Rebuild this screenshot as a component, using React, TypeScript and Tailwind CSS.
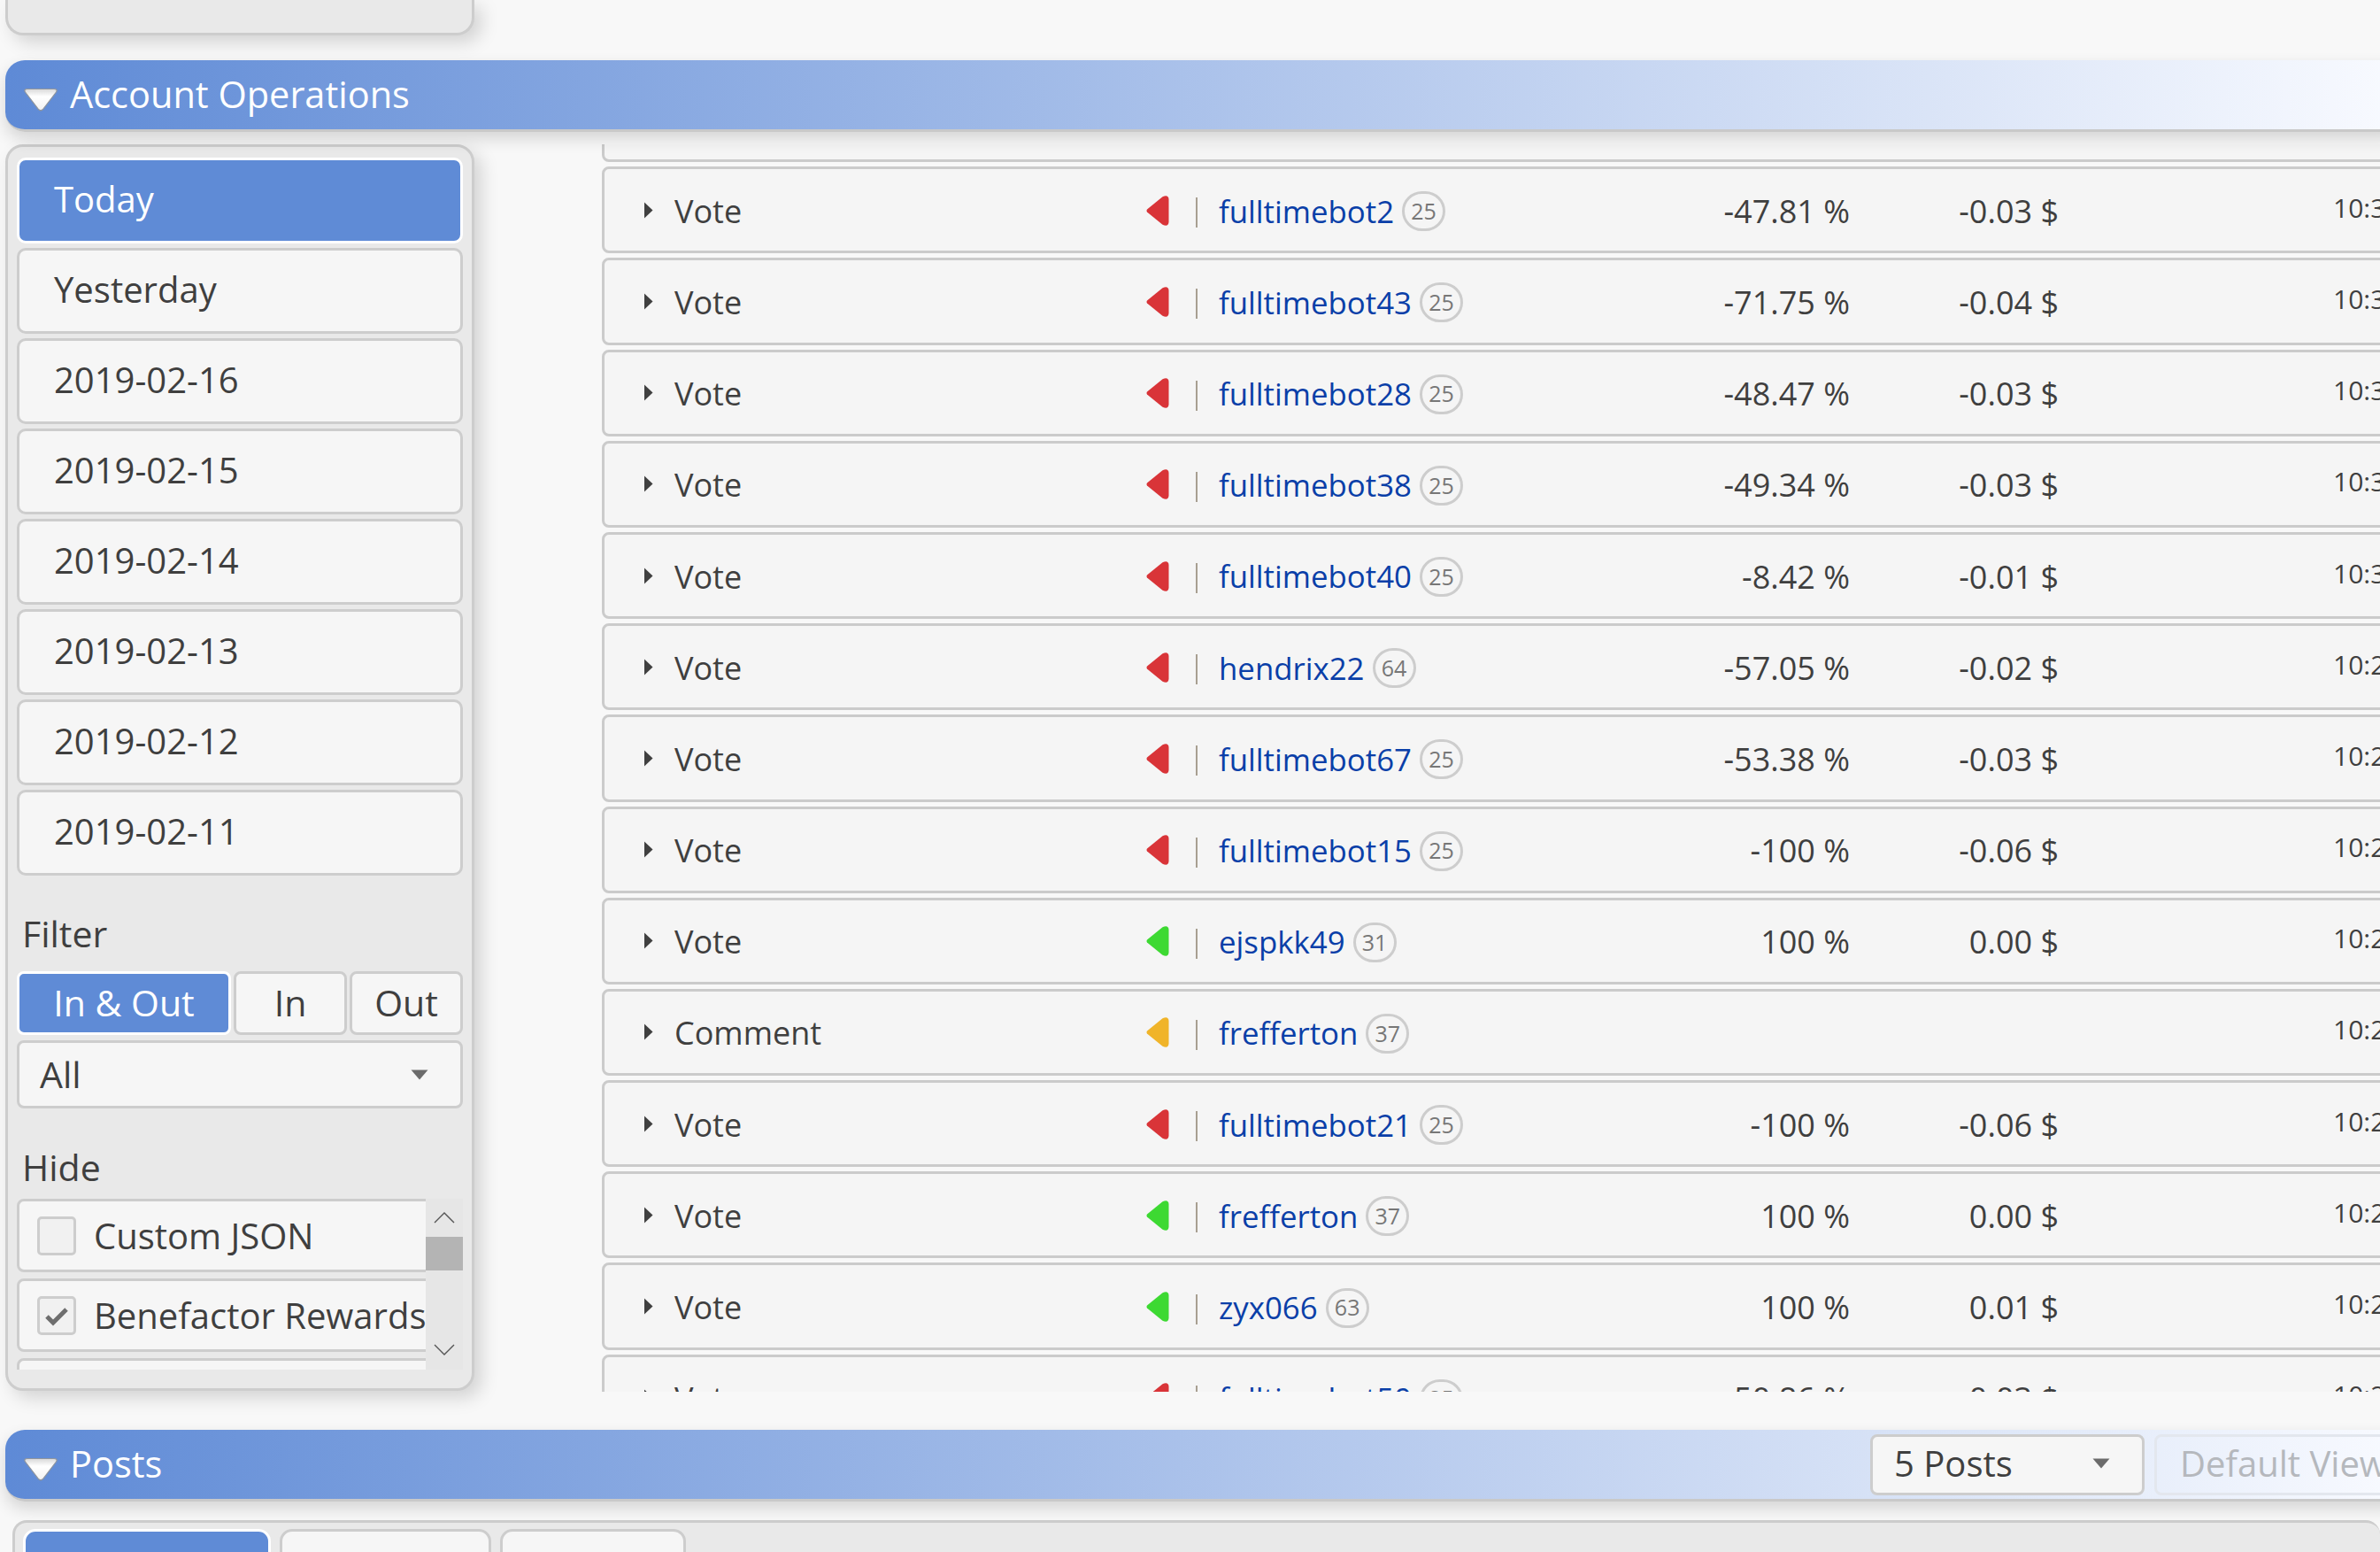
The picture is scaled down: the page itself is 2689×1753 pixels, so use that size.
type Op = {
    type: string
    dir: "red" | "green" | "amber"
    name: string
    rep: string
    pct?: string
    usd?: string
    time: string
}

const ops: Op[] = [
    { type: "Vote", dir: "red", name: "fulltimebot2", rep: "25", pct: "-47.81 %", usd: "-0.03 $", time: "10:31:12" },
    { type: "Vote", dir: "red", name: "fulltimebot43", rep: "25", pct: "-71.75 %", usd: "-0.04 $", time: "10:31:09" },
    { type: "Vote", dir: "red", name: "fulltimebot28", rep: "25", pct: "-48.47 %", usd: "-0.03 $", time: "10:31:03" },
    { type: "Vote", dir: "red", name: "fulltimebot38", rep: "25", pct: "-49.34 %", usd: "-0.03 $", time: "10:30:57" },
    { type: "Vote", dir: "red", name: "fulltimebot40", rep: "25", pct: "-8.42 %", usd: "-0.01 $", time: "10:30:51" },
    { type: "Vote", dir: "red", name: "hendrix22", rep: "64", pct: "-57.05 %", usd: "-0.02 $", time: "10:29:48" },
    { type: "Vote", dir: "red", name: "fulltimebot67", rep: "25", pct: "-53.38 %", usd: "-0.03 $", time: "10:29:42" },
    { type: "Vote", dir: "red", name: "fulltimebot15", rep: "25", pct: "-100 %", usd: "-0.06 $", time: "10:29:36" },
    { type: "Vote", dir: "green", name: "ejspkk49", rep: "31", pct: "100 %", usd: "0.00 $", time: "10:29:30" },
    { type: "Comment", dir: "amber", name: "frefferton", rep: "37", time: "10:29:24" },
    { type: "Vote", dir: "red", name: "fulltimebot21", rep: "25", pct: "-100 %", usd: "-0.06 $", time: "10:29:18" },
    { type: "Vote", dir: "green", name: "frefferton", rep: "37", pct: "100 %", usd: "0.00 $", time: "10:29:12" },
    { type: "Vote", dir: "green", name: "zyx066", rep: "63", pct: "100 %", usd: "0.01 $", time: "10:29:06" },
    { type: "Vote", dir: "red", name: "fulltimebot50", rep: "25", pct: "-50.86 %", usd: "-0.03 $", time: "10:29:00" },
]

const dates = ["Yesterday", "2019-02-16", "2019-02-15", "2019-02-14", "2019-02-13", "2019-02-12", "2019-02-11"]

const dirColor = { red: "#d93438", green: "#3dd932", amber: "#f0b429" }

function DirIcon({ dir }: { dir: Op["dir"] }) {
    return (
        <svg width="26" height="34" viewBox="0 0 26 34" className="mt-[1px] shrink-0">
            <path
                d="M1 15.5 L18.5 1.2 Q25 -1.5 25.5 4 L25.5 30 Q25 35.5 18.5 32.8 L1 18.5 Q0 17 1 15.5 Z"
                fill={dirColor[dir]}
            />
        </svg>
    )
}

function Disclosure() {
    return (
        <svg width="40" height="27" viewBox="0 0 40 27" className="mt-[10px] shrink-0">
            <defs>
                <linearGradient id="disc" x1="0" y1="0" x2="0" y2="1">
                    <stop offset="0" stopColor="#d8d8d8" />
                    <stop offset="0.35" stopColor="#ffffff" />
                    <stop offset="1" stopColor="#f2f2f2" />
                </linearGradient>
            </defs>
            <path
                d="M5 1.5 L35 1.5 Q39.5 1.5 37.5 5 L22.5 24.5 Q20 27 17.5 24.5 L2.5 5 Q0.5 1.5 5 1.5 Z"
                fill="url(#disc)"
                stroke="#8f959d"
                strokeWidth="1.2"
            />
        </svg>
    )
}

function Caret() {
    return (
        <svg width="20" height="12" viewBox="0 0 20 12" className="shrink-0">
            <path d="M0.5 0.5 L19.5 0.5 L10 11.5 Z" fill="#6b6b6b" />
        </svg>
    )
}

function SectionHeader({ title, children }: { title: string; children?: React.ReactNode }) {
    return (
        <div className="relative z-10 flex h-[81px] w-[2700px] items-center rounded-l-[22px] border-b-[3px] border-[#c9c9c9] bg-[linear-gradient(90deg,#5e8ad6_0%,#f8faff_100%)] pl-[20px] shadow-[0_8px_18px_rgba(0,0,0,0.14)]">
            <Disclosure />
            <span className="mb-[1px] ml-[13px] text-[41.5px] leading-none text-white">{title}</span>
            {children}
        </div>
    )
}

function OpRow({ op }: { op: Op }) {
    return (
        <div className="flex h-[98.2px] w-[2100px] shrink-0 items-center rounded-[8px] border-[3px] border-[#cbcbcb] bg-[#f5f5f5] pl-[44px] text-[36px] text-[#3f3f3f]">
            <svg width="11" height="19" viewBox="0 0 11 19" className="mr-[24px] shrink-0">
                <path d="M1 0.5 L10.5 9.5 L1 18.5 Z" fill="#404040" />
            </svg>
            <span className="mt-[3px] w-[533px] shrink-0">{op.type}</span>
            <DirIcon dir={op.dir} />
            <span className="ml-[30px] mt-[6px] h-[34px] w-[2px] shrink-0 bg-[#a89f91]" />
            <div className="ml-[24px] mt-[3px] flex w-[525px] shrink-0 items-center">
                <span className="text-[34.8px] text-[#0a3fa8]">{op.name}</span>
                <span className="ml-[9px] flex h-[45px] w-[49px] items-center justify-center rounded-full border-[3px] border-[#cdcdcd] text-[25px] text-[#777]">
                    {op.rep}
                </span>
            </div>
            <span className="mt-[3px] w-[188px] shrink-0 text-right">{op.pct}</span>
            <span className="mt-[3px] w-[236px] shrink-0 text-right">{op.usd}</span>
            <span className="ml-[310px] mt-[-6px] shrink-0 text-[30px]">{op.time}</span>
        </div>
    )
}

function DateButton({ label, active }: { label: string; active?: boolean }) {
    return (
        <div
            className={
                active
                    ? "flex h-[97px] items-center rounded-[10px] border-[3px] border-white bg-[#5f8bd6] pb-[3px] pl-[39px] text-[40px] text-white"
                    : "flex h-[97px] items-center rounded-[10px] border-[3px] border-[#cdcdcd] bg-[#f6f6f6] pb-[3px] pl-[39px] text-[40px] text-[#3f3f3f]"
            }
        >
            {label}
        </div>
    )
}

function HideRow({ label, checked }: { label: string; checked?: boolean }) {
    return (
        <div className="flex h-[83px] w-[480px] shrink-0 items-center rounded-[8px] border-[3px] border-[#cdcdcd] bg-[#f6f6f6] pl-[20px] text-[40px] text-[#3f3f3f]">
            <span className="flex h-[44px] w-[44px] shrink-0 items-center justify-center rounded-[5px] border-[3px] border-[#cdcdcd] bg-[#f1f1f1]">
                {checked && (
                    <svg width="28" height="24" viewBox="0 0 28 24">
                        <path d="M3 13 L10 20 L25 5" fill="none" stroke="#6e6e6e" strokeWidth="5" />
                    </svg>
                )}
            </span>
            <span className="ml-[20px] whitespace-nowrap">{label}</span>
        </div>
    )
}

function Sidebar() {
    return (
        <div className="relative z-[5] h-[1408px] w-[530px] shrink-0 rounded-[20px] border-[3px] border-[#cdcdcd] bg-[#e9e9e9] px-[10px] pt-[12px] shadow-[8px_8px_20px_rgba(0,0,0,0.15)]">
            <div className="flex flex-col gap-[5px]">
                <DateButton label="Today" active />
                {dates.map((d) => (
                    <DateButton key={d} label={d} />
                ))}
            </div>
            <div className="mb-[15px] ml-[6px] mt-[37px] text-[41px] leading-[56px] text-[#3f3f3f]">Filter</div>
            <div className="flex h-[72px] gap-[3px] text-[41px]">
                <div className="flex w-[242px] items-center justify-center rounded-[8px] border-[3px] border-white bg-[#5f8bd6] text-white">
                    In &amp; Out
                </div>
                <div className="flex w-[128px] items-center justify-center rounded-[8px] border-[3px] border-[#cdcdcd] bg-[#f6f6f6] text-[#3f3f3f]">
                    In
                </div>
                <div className="flex w-[128px] items-center justify-center rounded-[8px] border-[3px] border-[#cdcdcd] bg-[#f6f6f6] text-[#3f3f3f]">
                    Out
                </div>
            </div>
            <div className="mt-[6px] flex h-[77px] items-center justify-between rounded-[8px] border-[3px] border-[#cdcdcd] bg-[#f6f6f6] pl-[23px] pr-[36px] text-[41px] text-[#3f3f3f]">
                All
                <Caret />
            </div>
            <div className="ml-[6px] mt-[38px] text-[41px] leading-[56px] text-[#3f3f3f]">Hide</div>
            <div className="mt-[8px] flex h-[193px]">
                <div className="flex w-[462px] flex-col gap-[7px] overflow-hidden">
                    <HideRow label="Custom JSON" />
                    <HideRow label="Benefactor Rewards" checked />
                    <HideRow label="Curation Rewards" />
                </div>
                <div className="flex w-[42px] flex-col items-center bg-[#e6e6e6]">
                    <svg width="24" height="14" viewBox="0 0 24 14" className="mt-[14px] shrink-0">
                        <path d="M1 13 L12 2 L23 13" fill="none" stroke="#555" strokeWidth="1.4" />
                    </svg>
                    <div className="mt-[15px] h-[38px] w-full shrink-0 bg-[#b4b4b4]" />
                    <svg width="24" height="14" viewBox="0 0 24 14" className="mt-[83px] shrink-0">
                        <path d="M1 1 L12 12 L23 1" fill="none" stroke="#555" strokeWidth="1.4" />
                    </svg>
                </div>
            </div>
        </div>
    )
}

export default function App() {
    return (
        <div className="h-[1753px] w-[2689px] overflow-hidden bg-[#f8f8f8] pl-[6px] font-['Open_Sans',sans-serif]">
            <div className="h-[40px] w-[530px] rounded-b-[20px] border-x-[3px] border-b-[3px] border-[#cdcdcd] bg-[#e9e9e9] shadow-[8px_8px_20px_rgba(0,0,0,0.15)]" />

            <div className="mt-[28px]">
                <SectionHeader title="Account Operations" />
            </div>

            <div className="mt-[14px] flex">
                <Sidebar />
                <div className="ml-[144px] flex h-[1409px] flex-col gap-[5px] overflow-hidden">
                    <div className="-mt-[78px] h-[98.2px] w-[2100px] shrink-0 rounded-[8px] border-[3px] border-[#cbcbcb] bg-[#f5f5f5]" />
                    {ops.map((op, i) => (
                        <OpRow key={i} op={op} />
                    ))}
                </div>
            </div>

            <div className="mt-[43px]">
                <SectionHeader title="Posts">
                    <div className="ml-auto mr-[-28px] flex items-center gap-[11px]">
                        <div className="flex h-[69px] w-[310px] items-center justify-between rounded-[8px] border-[3px] border-[#cdcdcd] bg-[#f6f6f6] pb-[3px] pl-[24px] pr-[36px] text-[40px] text-[#3f3f3f]">
                            5 Posts
                            <Caret />
                        </div>
                        <div className="flex h-[69px] w-[300px] items-center rounded-[8px] border-[3px] border-[#e3e7ee] pb-[3px] pl-[26px] text-[40px] whitespace-nowrap text-[#b5b8bd]">
                            Default View
                        </div>
                    </div>
                </SectionHeader>
            </div>

            <div className="ml-[8px] mt-[21px] flex h-[60px] gap-[10px] rounded-t-[16px] border-t-[3px] border-l-[3px] border-[#cdcdcd] bg-[#e9e9e9] pl-[9px] pt-[7px]">
                <div className="h-[60px] w-[280px] rounded-t-[14px] border-[3px] border-white bg-[#5f8bd6]" />
                <div className="h-[60px] w-[239px] rounded-t-[14px] border-[3px] border-[#cdcdcd] bg-[#f6f6f6]" />
                <div className="h-[60px] w-[210px] rounded-t-[14px] border-[3px] border-[#cdcdcd] bg-[#f6f6f6]" />
            </div>
        </div>
    )
}
